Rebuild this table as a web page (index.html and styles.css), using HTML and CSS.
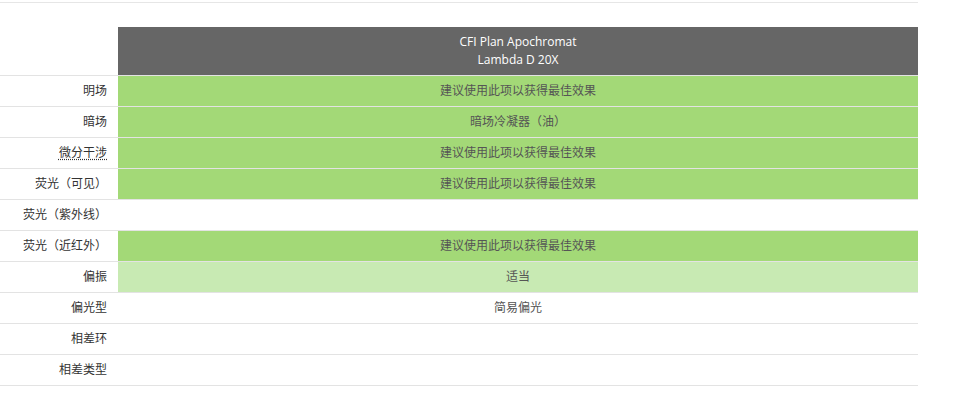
FILE: index.html
```html
<!DOCTYPE html>
<html lang="zh-CN">
<head>
<meta charset="utf-8">
<link rel="stylesheet" href="styles.css">
</head>
<body>
<div class="wrap">
  <table class="spec">
    <thead>
      <tr>
        <th class="label-head"></th>
        <th class="model">CFI Plan Apochromat<br>Lambda D 20X</th>
      </tr>
    </thead>
    <tbody>
      <tr><td class="label">明场</td><td class="val best">建议使用此项以获得最佳效果</td></tr>
      <tr><td class="label">暗场</td><td class="val best">暗场冷凝器（油）</td></tr>
      <tr><td class="label"><abbr class="dotted">微分干涉</abbr></td><td class="val best">建议使用此项以获得最佳效果</td></tr>
      <tr><td class="label">荧光（可见）</td><td class="val best">建议使用此项以获得最佳效果</td></tr>
      <tr><td class="label">荧光（紫外线）</td><td class="val"></td></tr>
      <tr><td class="label">荧光（近红外）</td><td class="val best">建议使用此项以获得最佳效果</td></tr>
      <tr><td class="label">偏振</td><td class="val ok">适当</td></tr>
      <tr><td class="label">偏光型</td><td class="val">简易偏光</td></tr>
      <tr><td class="label">相差环</td><td class="val"></td></tr>
      <tr><td class="label">相差类型</td><td class="val"></td></tr>
    </tbody>
  </table>
</div>
</body>
</html>
```
FILE: styles.css
```css
html, body {
  margin: 0;
  padding: 0;
  background: #fff;
}
body {
  font-family: "Open Sans", "Noto Sans CJK SC", sans-serif;
  font-size: 12px;
  color: #333;
}
.wrap {
  width: 918px;
  margin-top: 2px;
  border-top: 1px solid #e6e6e6;
  padding-top: 24px;
}
.spec {
  width: 918px;
  border-collapse: collapse;
  table-layout: fixed;
}
.label-head {
  width: 118px;
  padding: 0;
}
.model {
  background: #666666;
  color: #fff;
  font-weight: normal;
  line-height: 18px;
  height: 48px;
  padding: 0;
  text-align: center;
  vertical-align: middle;
}
.spec td {
  height: 30px;
  padding: 0;
  border-top: 1px solid #e3e3e3;
  vertical-align: middle;
  line-height: 16px;
}
.spec tbody tr:last-child td {
  border-bottom: 1px solid #e3e3e3;
}
.label {
  text-align: right;
  padding-right: 11px !important;
  color: #333;
}
.val {
  text-align: center;
  color: #555;
}
.best {
  background: #a3d977;
}
.ok {
  background: #c8eab3;
}
.dotted {
  text-decoration: underline dotted;
  text-underline-offset: 2px;
}
```
